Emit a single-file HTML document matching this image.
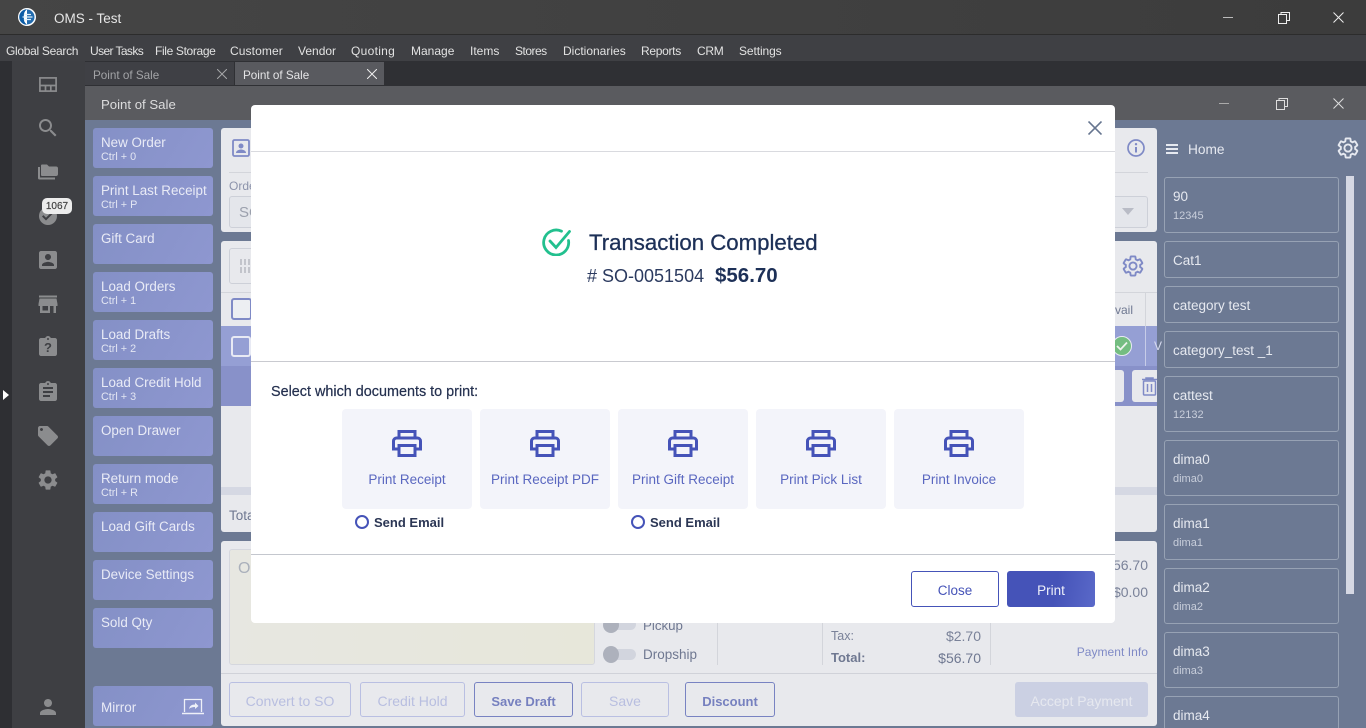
<!DOCTYPE html>
<html><head><meta charset="utf-8"><title>OMS - Test</title>
<style>
html,body{margin:0;padding:0;width:1366px;height:728px;overflow:hidden;background:#2f3034}
body{position:relative;font-family:"Liberation Sans","Noto Sans CJK JP",sans-serif}
div,span,svg{position:absolute;box-sizing:border-box}
.t{white-space:nowrap;line-height:1}
.m{font-size:12px;color:#e2e2e2;top:45px}
.lb{left:93px;width:120px;height:40px;background:linear-gradient(120deg,#8490c6,#8e97d0);border-radius:3px}
.lb b{position:absolute;left:8px;top:8px;font-weight:400;font-size:13.400px;color:#e9ebf6;line-height:1;white-space:nowrap}
.lb i{position:absolute;left:8px;top:24px;font-style:normal;font-size:10.800px;color:#e3e6f3;line-height:1;white-space:nowrap}
.c{left:1164px;width:175px;border:1px solid #97a2b4;border-radius:3px;background:#6c7993}
.c b{position:absolute;left:8px;font-weight:400;font-size:13.500px;color:#e6e9f0;line-height:1;white-space:nowrap}
.c i{position:absolute;left:8px;top:33px;font-style:normal;font-size:11px;color:#c8cedb;line-height:1;white-space:nowrap}
.pc{top:409px;width:130px;height:100px;background:#f3f4fa;border-radius:4px}
.pc svg{left:50px;top:21px}
.pc span{left:0;width:130px;top:64px;text-align:center;font-size:13.500px;color:#5a67c0;line-height:1;white-space:nowrap}
.rad{width:14px;height:14px;border:2px solid #4553b8;border-radius:50%;top:515px}
.se{font-size:13px;font-weight:700;color:#2b3654}
.bb{top:682px;height:35px;border:1px solid #b9bfe2;border-radius:3px;text-align:center;font-size:14px;line-height:37px;color:#b8bee0}
.bd{border-color:#7883c2;color:#7680bf;font-size:13px;font-weight:700}
.ic{fill:#8b8c8e}
</style></head><body>
<!-- title bar -->
<div style="left:0;top:0;width:1366px;height:34px;background:linear-gradient(90deg,#454545,#3c3c3c)"></div>
<div style="left:0;top:34px;width:1366px;height:1px;background:#2c2c2c"></div>
<div style="left:0;top:35px;width:1366px;height:26px;background:#3f4044"></div>
<svg style="left:18px;top:8px" width="18" height="18" viewBox="0 0 18 18"><circle cx="9" cy="9" r="9" fill="#fff"/><path d="M9 1.200A7.800 7.800 0 0 0 9 16.800 8 8 0 0 1 6 9a8 8 0 0 1 3-7.800z" fill="#0b5ca6"/><path d="M9 1.500a7.500 7.500 0 0 1 0 15z" fill="#0b5ca6" opacity=".9"/><path d="M6 6.500h7M4.500 9h10M6 11.500h7" stroke="#dff0fa" stroke-width="1.300"/></svg>
<div class="t" style="left:54px;top:12px;font-size:13.500px;color:#e6e6e6">OMS - Test</div>
<div style="left:1223px;top:17px;width:10px;height:1px;background:#bbb"></div>
<svg style="left:1278px;top:12px" width="12" height="12" viewBox="0 0 12 12" fill="none" stroke="#eee"><rect x=".5" y="2.500" width="8" height="9"/><path d="M3 2.500V.5h8.500v8H8.500"/></svg>
<svg style="left:1333px;top:12px" width="11" height="11" viewBox="0 0 11 11" stroke="#eee"><path d="M.5.5l10 10M10.500.5l-10 10"/></svg>
<div class="t m" style="left:6px;letter-spacing:-.3px">Global Search</div>
<div class="t m" style="left:90px;letter-spacing:-.6px">User Tasks</div>
<div class="t m" style="left:155px;letter-spacing:-.35px">File Storage</div>
<div class="t m" style="left:230px;letter-spacing:.1px">Customer</div>
<div class="t m" style="left:298px">Vendor</div>
<div class="t m" style="left:351px;letter-spacing:.3px">Quoting</div>
<div class="t m" style="left:411px">Manage</div>
<div class="t m" style="left:470px">Items</div>
<div class="t m" style="left:515px;letter-spacing:-.5px">Stores</div>
<div class="t m" style="left:563px">Dictionaries</div>
<div class="t m" style="left:641px;letter-spacing:-.3px">Reports</div>
<div class="t m" style="left:697px;letter-spacing:-.3px">CRM</div>
<div class="t m" style="left:739px;letter-spacing:-.1px">Settings</div>
<!-- left rail -->
<div style="left:0;top:61px;width:12px;height:667px;background:#2e2f33"></div>
<div style="left:12px;top:61px;width:73px;height:667px;background:#3e3f43"></div>
<svg style="left:3px;top:390px" width="6" height="10"><path d="M0 0l6 5-6 5z" fill="#fff"/></svg>
<svg style="left:39px;top:77px" width="18" height="15" viewBox="0 0 18 15" fill="none" stroke="#8b8c8e" stroke-width="1.700"><rect x=".9" y=".9" width="16.200" height="13.200"/><path d="M.9 8.500h16.200M6.500 8.500v5.700M11.800 8.500v5.700"/></svg>
<svg style="left:36px;top:116px" width="24" height="24" viewBox="0 0 24 24"><path class="ic" d="M15.500 14h-.79l-.28-.27C15.410 12.590 16 11.110 16 9.500 16 5.910 13.090 3 9.500 3S3 5.910 3 9.500 5.910 16 9.500 16c1.610 0 3.090-.59 4.230-1.570l.27.28v.79l5 4.990L20.490 19l-4.990-5zm-6 0C7.010 14 5 11.990 5 9.500S7.010 5 9.500 5 14 7.010 14 9.500 11.990 14 9.500 14z"/></svg>
<svg style="left:38px;top:164px" width="20" height="16" viewBox="0 0 20 16"><path class="ic" d="M4 .5h5l2 2h7a2 2 0 0 1 2 2V10a2 2 0 0 1-2 2H4a1 1 0 0 1-1-1V1.500a1 1 0 0 1 1-1zM0 3h2v10.500h15V15.500H1.500A1.500 1.500 0 0 1 0 14z"/></svg>
<svg style="left:36px;top:204px" width="24" height="24" viewBox="0 0 24 24"><path class="ic" d="M12 3a9 9 0 1 0 0 18 9 9 0 0 0 0-18zm-2 13.500l-4-4 1.400-1.400 2.600 2.600 6.600-6.600L18 8.500z"/></svg>
<div class="t" style="left:42px;top:198px;width:30px;height:16px;background:#ececec;border-radius:5px;font-size:10px;color:#444;text-align:center;line-height:18px;-webkit-text-stroke:.2px #444">1067</div>
<svg style="left:36px;top:248px" width="24" height="24" viewBox="0 0 24 24"><path class="ic" d="M3 5v14c0 1.100.89 2 2 2h14c1.100 0 2-.9 2-2V5c0-1.100-.9-2-2-2H5c-1.110 0-2 .9-2 2zm12 4c0 1.660-1.340 3-3 3s-3-1.340-3-3 1.340-3 3-3 3 1.340 3 3zm-9 8c0-2 4-3.100 6-3.100s6 1.100 6 3.100v1H6v-1z"/></svg>
<svg style="left:36px;top:292px" width="24" height="24" viewBox="0 0 24 24"><path class="ic" d="M21 3.500H3v2h18zM21.500 14v-2L20.500 6.500h-17L2.500 12v2H4v7h10v-7h3.500v7H20v-7zM12 18.500H6.500V14H12z"/></svg>
<svg style="left:36px;top:335px" width="24" height="24" viewBox="0 0 24 24"><path class="ic" d="M19 3h-4.180C14.400 1.840 13.300 1 12 1c-1.300 0-2.400.84-2.820 2H5c-1.100 0-2 .9-2 2v14c0 1.100.9 2 2 2h14c1.100 0 2-.9 2-2V5c0-1.100-.9-2-2-2zm-7 0c.55 0 1 .45 1 1s-.45 1-1 1-1-.45-1-1 .45-1 1-1z"/></svg>
<div class="t" style="left:36px;top:341px;width:24px;text-align:center;font-size:13px;font-weight:700;color:#3e3f43">?</div>
<svg style="left:36px;top:380px" width="24" height="24" viewBox="0 0 24 24"><path class="ic" d="M19 3h-4.180C14.400 1.840 13.300 1 12 1c-1.300 0-2.400.84-2.820 2H5c-1.100 0-2 .9-2 2v14c0 1.100.9 2 2 2h14c1.100 0 2-.9 2-2V5c0-1.100-.9-2-2-2zm-7 0c.55 0 1 .45 1 1s-.45 1-1 1-1-.45-1-1 .45-1 1-1zm2 14H7v-2h7v2zm3-4H7v-2h10v2zm0-4H7V7h10v2z"/></svg>
<svg style="left:36px;top:424px" width="24" height="24" viewBox="0 0 24 24"><path class="ic" d="M21.410 11.580l-9-9C12.050 2.220 11.550 2 11 2H4c-1.100 0-2 .9-2 2v7c0 .55.22 1.050.59 1.420l9 9c.36.36.86.58 1.410.58.55 0 1.050-.22 1.410-.59l7-7c.37-.36.59-.86.59-1.410 0-.55-.23-1.060-.59-1.420zM5.500 7C4.670 7 4 6.330 4 5.500S4.670 4 5.500 4 7 4.670 7 5.500 6.330 7 5.500 7z"/></svg>
<svg style="left:36px;top:468px" width="24" height="24" viewBox="0 0 24 24"><path class="ic" d="M19.140 12.940c.04-.3.06-.61.06-.94 0-.32-.02-.64-.07-.94l2.030-1.580c.18-.14.23-.41.12-.61l-1.920-3.320c-.12-.22-.37-.29-.59-.22l-2.390.96c-.5-.38-1.030-.7-1.620-.94l-.36-2.540c-.04-.24-.24-.41-.48-.41h-3.840c-.24 0-.43.17-.47.41l-.36 2.540c-.59.24-1.130.57-1.620.94l-2.390-.96c-.22-.08-.47 0-.59.22L2.740 8.870c-.12.21-.08.47.12.61l2.030 1.580c-.05.3-.09.63-.09.94s.02.64.07.94l-2.030 1.580c-.18.14-.23.41-.12.61l1.920 3.320c.12.22.37.29.59.22l2.390-.96c.5.38 1.030.7 1.620.94l.36 2.540c.05.24.24.41.48.41h3.840c.24 0 .44-.17.47-.41l.36-2.540c.59-.24 1.130-.56 1.620-.94l2.390.96c.22.08.47 0 .59-.22l1.920-3.320c.12-.22.07-.47-.12-.61l-2.010-1.580zM12 15.600c-1.980 0-3.600-1.620-3.600-3.600s1.620-3.600 3.600-3.600 3.600 1.620 3.600 3.600-1.620 3.600-3.600 3.600z"/></svg>
<svg style="left:36px;top:695px" width="24" height="24" viewBox="0 0 24 24"><path class="ic" d="M12 12c2.210 0 4-1.790 4-4s-1.790-4-4-4-4 1.790-4 4 1.790 4 4 4zm0 2c-2.670 0-8 1.340-8 4v2h16v-2c0-2.660-5.330-4-8-4z"/></svg>
<!-- tabs -->
<div style="left:85px;top:62px;width:149px;height:23px;background:#3f4045"></div>
<div class="t" style="left:93px;top:70px;font-size:11.700px;color:#a2a3a6">Point of Sale</div>
<svg style="left:217px;top:69px" width="10" height="10" stroke="#a5a6a8"><path d="M0 0l10 10M10 0L0 10"/></svg>
<div style="left:235px;top:62px;width:149px;height:23px;background:#595a5f"></div>
<div class="t" style="left:243px;top:70px;font-size:11.700px;color:#e4e4e6">Point of Sale</div>
<svg style="left:367px;top:69px" width="10" height="10" stroke="#eee"><path d="M0 0l10 10M10 0L0 10"/></svg>
<!-- inner window -->
<div style="left:85px;top:86px;width:1281px;height:34px;background:#5a5b5f"></div>
<div class="t" style="left:101px;top:98px;font-size:13.200px;color:#dcdcdd">Point of Sale</div>
<div style="left:1219px;top:103px;width:10px;height:1px;background:#aaa"></div>
<svg style="left:1276px;top:98px" width="12" height="12" viewBox="0 0 12 12" fill="none" stroke="#ddd"><rect x=".5" y="2.500" width="8" height="9"/><path d="M3 2.500V.5h8.500v8H8.500"/></svg>
<svg style="left:1333px;top:98px" width="11" height="11" viewBox="0 0 11 11" stroke="#ddd"><path d="M.5.5l10 10M10.500.5l-10 10"/></svg>
<div style="left:85px;top:120px;width:1281px;height:608px;background:#6c7993"></div>
<!-- left buttons -->
<div class="lb" style="top:128px"><b>New Order</b><i>Ctrl + 0</i></div>
<div class="lb" style="top:176px"><b>Print Last Receipt</b><i>Ctrl + P</i></div>
<div class="lb" style="top:224px"><b>Gift Card</b></div>
<div class="lb" style="top:272px"><b>Load Orders</b><i>Ctrl + 1</i></div>
<div class="lb" style="top:320px"><b>Load Drafts</b><i>Ctrl + 2</i></div>
<div class="lb" style="top:368px"><b>Load Credit Hold</b><i>Ctrl + 3</i></div>
<div class="lb" style="top:416px"><b>Open Drawer</b></div>
<div class="lb" style="top:464px"><b>Return mode</b><i>Ctrl + R</i></div>
<div class="lb" style="top:512px"><b>Load Gift Cards</b></div>
<div class="lb" style="top:560px"><b>Device Settings</b></div>
<div class="lb" style="top:608px"><b>Sold Qty</b></div>
<div class="lb" style="top:686px"><b style="top:15px;font-size:13.500px">Mirror</b></div>
<svg style="left:181px;top:698px" width="24" height="18" viewBox="0 0 24 18" fill="none" stroke="#eef0f8" stroke-width="1.300"><path d="M3.500 14V1.500h17V14"/><path d="M1 15.500h22" stroke-width="1.600"/><path d="M8 11c.5-3 2.500-4.500 6-4.500V4.500l3.500 3.500-3.500 3V9c-2.500 0-4.500.5-6 2z" fill="#eef0f8" stroke="none"/></svg>
<!-- panel 1 -->
<div style="left:221px;top:128px;width:936px;height:104px;background:#e8e9ed;border-radius:3px"></div>
<svg style="left:232px;top:139px" width="18" height="18" viewBox="0 0 18 18" fill="none"><rect x="1" y="1" width="16" height="16" rx="1.500" stroke="#7f8ac6" stroke-width="1.800"/><circle cx="9" cy="7" r="2.500" fill="#7f8ac6"/><path d="M4 14c0-2.500 3-3.500 5-3.500s5 1 5 3.500z" fill="#7f8ac6"/></svg>
<div style="left:229px;top:172px;width:919px;height:1px;background:#d3d5db"></div>
<div class="t" style="left:229px;top:180px;font-size:12px;color:#8c93ab">Order</div>
<div style="left:229px;top:196px;width:919px;height:32px;background:#e4e6eb;border:1px solid #cdd0d8;border-radius:3px"></div>
<div class="t" style="left:239px;top:205px;font-size:15px;color:#9ba0ad">SO</div>
<svg style="left:1122px;top:208px" width="12" height="7"><path d="M0 0h12L6 7z" fill="#b9bcc6"/></svg>
<svg style="left:1127px;top:139px" width="18" height="18" viewBox="0 0 18 18" fill="none"><circle cx="9" cy="9" r="8" stroke="#7f8ac6" stroke-width="1.700"/><path d="M9 8v5.500" stroke="#7f8ac6" stroke-width="2"/><circle cx="9" cy="5.200" r="1.200" fill="#7f8ac6"/></svg>
<!-- panel 2 -->
<div style="left:221px;top:241px;width:936px;height:291px;background:#e8e9ed;border-radius:3px"></div>
<div style="left:229px;top:248px;width:40px;height:36px;border:1px solid #cdd0d8;border-radius:3px"></div>
<div style="left:240px;top:259px;width:11px;height:6px;background:repeating-linear-gradient(90deg,#c2c4cb 0 2px,transparent 2px 4px)"></div>
<div style="left:240px;top:267px;width:11px;height:6px;background:repeating-linear-gradient(90deg,#c2c4cb 0 2px,transparent 2px 4px)"></div>
<svg style="left:1121px;top:254px" width="24" height="24" viewBox="0 0 24 24"><path fill="none" stroke="#7f8ac6" stroke-width="1.900" d="M19.140 12.940c.04-.3.06-.61.06-.94 0-.32-.02-.64-.07-.94l2.030-1.580c.18-.14.23-.41.12-.61l-1.920-3.320c-.12-.22-.37-.29-.59-.22l-2.390.96c-.5-.38-1.030-.7-1.620-.94l-.36-2.540c-.04-.24-.24-.41-.48-.41h-3.840c-.24 0-.43.17-.47.41l-.36 2.540c-.59.24-1.130.57-1.620.94l-2.390-.96c-.22-.08-.47 0-.59.22L2.740 8.870c-.12.21-.08.47.12.61l2.030 1.580c-.05.3-.09.63-.09.94s.02.64.07.94l-2.030 1.580c-.18.14-.23.41-.12.61l1.920 3.320c.12.22.37.29.59.22l2.390-.96c.5.38 1.030.7 1.620.94l.36 2.540c.05.24.24.41.48.41h3.840c.24 0 .44-.17.47-.41l.36-2.540c.59-.24 1.130-.56 1.620-.94l2.390.96c.22.08.47 0 .59-.22l1.920-3.320c.12-.22.07-.47-.12-.61l-2.010-1.580zM12 15.600c-1.980 0-3.600-1.620-3.600-3.600s1.620-3.600 3.600-3.600 3.600 1.620 3.600 3.600-1.620 3.600-3.600 3.600z"/></svg>
<div style="left:221px;top:292px;width:936px;height:1px;background:#d3d5db"></div>
<div style="left:231px;top:298px;width:21px;height:22px;border:2px solid #7f8ac6;border-radius:3px;background:#eceef2"></div>
<div class="t" style="left:1115px;top:304px;font-size:12px;color:#6f7891">vail</div>
<div style="left:1145px;top:293px;width:1px;height:33px;background:#d3d5db"></div>
<div style="left:221px;top:326px;width:936px;height:40px;background:#959fd4"></div>
<div style="left:231px;top:336px;width:20px;height:21px;border:2px solid #e8eaf4;border-radius:3px"></div>
<div style="left:1145px;top:326px;width:1px;height:40px;background:#c7cce8"></div>
<div style="left:1112px;top:336px;width:20px;height:20px;background:#74bd81;border:1.500px solid #e8eaf4;border-radius:50%"></div>
<svg style="left:1116px;top:341px" width="12" height="10" fill="none" stroke="#eef3ee" stroke-width="1.800"><path d="M1 5l3.500 3.500L11 1.500"/></svg>
<div class="t" style="left:1154px;top:340px;font-size:12px;color:#d8dcf0">V</div>
<div style="left:221px;top:366px;width:936px;height:40px;background:#8891c9"></div>
<div style="left:1095px;top:370px;width:29px;height:32px;background:#e8e9ed;border-radius:3px"></div>
<div style="left:1132px;top:370px;width:25px;height:32px;background:#e8e9ed;border-radius:3px 0 0 3px"></div>
<svg style="left:1142px;top:377px" width="15" height="19" viewBox="0 0 15 19" fill="none" stroke="#7f8ac6" stroke-width="1.500"><path d="M0 2.500h15M4 2.500V1h7v1.500"/><rect x="1.500" y="4" width="12" height="14" rx="1"/><path d="M5.500 7v8M9.500 7v8"/></svg>
<div style="left:221px;top:487px;width:936px;height:8px;background:#d5d8e3"></div>
<div class="t" style="left:229px;top:509px;font-size:13.500px;color:#6f7891">Total</div>
<!-- panel 3 -->
<div style="left:221px;top:541px;width:936px;height:185px;background:#e8e9ed;border-radius:3px"></div>
<div style="left:229px;top:549px;width:366px;height:116px;background:linear-gradient(90deg,#e7e7e1,#e7e7da);border:1px solid #d5d7de;border-radius:3px"></div>
<div class="t" style="left:238px;top:561px;font-size:16px;color:#aab0bb">O</div>
<div style="left:604px;top:619px;width:32px;height:11px;background:#d2d5de;border-radius:6px"></div>
<div style="left:603px;top:617px;width:16px;height:16px;background:#adb1bc;border-radius:50%"></div>
<div class="t" style="left:643px;top:619px;font-size:13.300px;color:#6f7891">Pickup</div>
<div style="left:604px;top:649px;width:32px;height:11px;background:#d2d5de;border-radius:6px"></div>
<div style="left:603px;top:646px;width:16px;height:17px;background:#adb1bc;border-radius:50%"></div>
<div class="t" style="left:643px;top:648px;font-size:13.500px;color:#6f7891">Dropship</div>
<div style="left:717px;top:549px;width:1px;height:116px;background:#d3d5db"></div>
<div style="left:822px;top:549px;width:1px;height:116px;background:#d3d5db"></div>
<div style="left:990px;top:549px;width:1px;height:116px;background:#d3d5db"></div>
<div class="t" style="left:831px;top:630px;font-size:12.500px;color:#7a8299">Tax:</div>
<div class="t" style="right:385px;top:629px;font-size:14px;color:#7a8299">$2.70</div>
<div class="t" style="left:831px;top:651px;font-size:13px;font-weight:700;color:#6f7891">Total:</div>
<div class="t" style="right:385px;top:651px;font-size:14px;color:#6f7891">$56.70</div>
<div class="t" style="right:218px;top:558px;font-size:14px;color:#7a8299">$56.70</div>
<div class="t" style="right:218px;top:585px;font-size:14px;color:#7a8299">$0.00</div>
<div class="t" style="right:218px;top:646px;font-size:12px;letter-spacing:.05px;color:#7f8ac6">Payment Info</div>
<div style="left:221px;top:673px;width:936px;height:1px;background:#d0d2d9"></div>
<div class="bb" style="left:229px;width:122px">Convert to SO</div>
<div class="bb" style="left:360px;width:105px">Credit Hold</div>
<div class="bb bd" style="left:474px;width:99px">Save Draft</div>
<div class="bb" style="left:581px;width:88px">Save</div>
<div class="bb bd" style="left:685px;width:90px">Discount</div>
<div class="bb" style="left:1015px;width:133px;background:#cbd0e3;border:0;color:#e6e8ef;line-height:39px">Accept Payment</div>
<!-- right column -->
<div style="left:1166px;top:144px;width:12px;height:2px;background:#e6e9f0"></div>
<div style="left:1166px;top:148px;width:12px;height:2px;background:#e6e9f0"></div>
<div style="left:1166px;top:152px;width:12px;height:2px;background:#e6e9f0"></div>
<div class="t" style="left:1188px;top:143px;font-size:13.700px;color:#e6e9f0">Home</div>
<svg style="left:1336px;top:136px" width="24" height="24" viewBox="0 0 24 24"><path fill="none" stroke="#e6e9f0" stroke-width="1.900" d="M19.140 12.940c.04-.3.06-.61.06-.94 0-.32-.02-.64-.07-.94l2.030-1.580c.18-.14.23-.41.12-.61l-1.920-3.320c-.12-.22-.37-.29-.59-.22l-2.390.96c-.5-.38-1.030-.7-1.620-.94l-.36-2.540c-.04-.24-.24-.41-.48-.41h-3.840c-.24 0-.43.17-.47.41l-.36 2.540c-.59.24-1.130.57-1.620.94l-2.390-.96c-.22-.08-.47 0-.59.22L2.740 8.870c-.12.21-.08.47.12.61l2.030 1.580c-.05.3-.09.63-.09.94s.02.64.07.94l-2.030 1.580c-.18.14-.23.41-.12.61l1.920 3.320c.12.22.37.29.59.22l2.390-.96c.5.38 1.030.7 1.620.94l.36 2.540c.05.24.24.41.48.41h3.840c.24 0 .44-.17.47-.41l.36-2.540c.59-.24 1.130-.56 1.620-.94l2.390.96c.22.08.47 0 .59-.22l1.920-3.320c.12-.22.07-.47-.12-.61l-2.010-1.580zM12 15.600c-1.980 0-3.600-1.620-3.600-3.600s1.620-3.600 3.600-3.600 3.600 1.620 3.600 3.600-1.620 3.600-3.600 3.600z"/></svg>
<div style="left:1346px;top:176px;width:8px;height:418px;background:#d5d8e3"></div>
<div class="c" style="top:177px;height:56px"><b style="top:12px">90</b><i>12345</i></div>
<div class="c" style="top:241px;height:37px"><b style="top:12px">Cat1</b></div>
<div class="c" style="top:286px;height:37px"><b style="top:12px">category test</b></div>
<div class="c" style="top:331px;height:37px"><b style="top:12px">category_test _1</b></div>
<div class="c" style="top:376px;height:56px"><b style="top:12px">cattest</b><i>12132</i></div>
<div class="c" style="top:440px;height:56px"><b style="top:12px">dima0</b><i>dima0</i></div>
<div class="c" style="top:504px;height:56px"><b style="top:12px">dima1</b><i>dima1</i></div>
<div class="c" style="top:568px;height:56px"><b style="top:12px">dima2</b><i>dima2</i></div>
<div class="c" style="top:632px;height:56px"><b style="top:12px">dima3</b><i>dima3</i></div>
<div class="c" style="top:696px;height:56px"><b style="top:12px">dima4</b></div>
<!-- modal -->
<div style="left:251px;top:105px;width:864px;height:518px;background:#fff;border-radius:4px"></div>
<svg style="left:1088px;top:121px" width="14" height="14" viewBox="0 0 14 14" stroke="#66758f" stroke-width="1.600"><path d="M.5.5l13 13M13.500.5l-13 13"/></svg>
<div style="left:251px;top:151px;width:864px;height:1px;background:#d9dadf"></div>
<div style="left:251px;top:361px;width:864px;height:1px;background:#c9cad0"></div>
<div style="left:251px;top:554px;width:864px;height:1px;background:#c4c7ce"></div>
<svg style="left:542px;top:228px" width="30" height="28" viewBox="0 0 30 28" fill="none" stroke="#22c08e" stroke-width="2.800" stroke-linecap="round"><path d="M26.500 12.500A12.500 12.500 0 1 1 19.500 3.200"/><path d="M8 13l6 6.500L27.500 3.500"/></svg>
<div class="t" style="left:589px;top:232px;font-size:22.200px;font-weight:400;color:#1d3057;-webkit-text-stroke:.3px #1d3057">Transaction Completed</div>
<div class="t" style="left:587px;top:267px;font-size:18px;color:#2b3a5f"># SO-0051504</div>
<div class="t" style="left:715px;top:266px;font-size:20.500px;font-weight:700;color:#1d3057">$56.70</div>
<div class="t" style="left:271px;top:385px;font-size:14.400px;color:#24304f;-webkit-text-stroke:.2px #24304f">Select which documents to print:</div>
<div class="pc" style="left:342px"><svg width="30" height="27" viewBox="0 0 30 27" fill="none" stroke="#4553b8" stroke-width="3"><path d="M7 8V1.500h16V8"/><path d="M7 19H1.500V11a3 3 0 0 1 3-3h21a3 3 0 0 1 3 3v8H23"/><path d="M7 15.500h16v10H7z"/></svg><span>Print Receipt</span></div>
<div class="pc" style="left:480px"><svg width="30" height="27" viewBox="0 0 30 27" fill="none" stroke="#4553b8" stroke-width="3"><path d="M7 8V1.500h16V8"/><path d="M7 19H1.500V11a3 3 0 0 1 3-3h21a3 3 0 0 1 3 3v8H23"/><path d="M7 15.500h16v10H7z"/></svg><span>Print Receipt PDF</span></div>
<div class="pc" style="left:618px"><svg width="30" height="27" viewBox="0 0 30 27" fill="none" stroke="#4553b8" stroke-width="3"><path d="M7 8V1.500h16V8"/><path d="M7 19H1.500V11a3 3 0 0 1 3-3h21a3 3 0 0 1 3 3v8H23"/><path d="M7 15.500h16v10H7z"/></svg><span>Print Gift Receipt</span></div>
<div class="pc" style="left:756px"><svg width="30" height="27" viewBox="0 0 30 27" fill="none" stroke="#4553b8" stroke-width="3"><path d="M7 8V1.500h16V8"/><path d="M7 19H1.500V11a3 3 0 0 1 3-3h21a3 3 0 0 1 3 3v8H23"/><path d="M7 15.500h16v10H7z"/></svg><span>Print Pick List</span></div>
<div class="pc" style="left:894px"><svg width="30" height="27" viewBox="0 0 30 27" fill="none" stroke="#4553b8" stroke-width="3"><path d="M7 8V1.500h16V8"/><path d="M7 19H1.500V11a3 3 0 0 1 3-3h21a3 3 0 0 1 3 3v8H23"/><path d="M7 15.500h16v10H7z"/></svg><span>Print Invoice</span></div>
<div class="rad" style="left:355px"></div>
<div class="t se" style="left:374px;top:516px">Send Email</div>
<div class="rad" style="left:631px"></div>
<div class="t se" style="left:650px;top:516px">Send Email</div>
<div style="left:911px;top:571px;width:88px;height:36px;border:1px solid #4553b8;border-radius:3px;text-align:center;font-size:13.500px;line-height:37px;color:#4553b8;background:#fff">Close</div>
<div style="left:1007px;top:571px;width:88px;height:36px;border-radius:3px;text-align:center;font-size:13.500px;line-height:39px;color:#eef0fa;background:linear-gradient(100deg,#4553b8 55%,#5a69c9)">Print</div>
</body></html>
